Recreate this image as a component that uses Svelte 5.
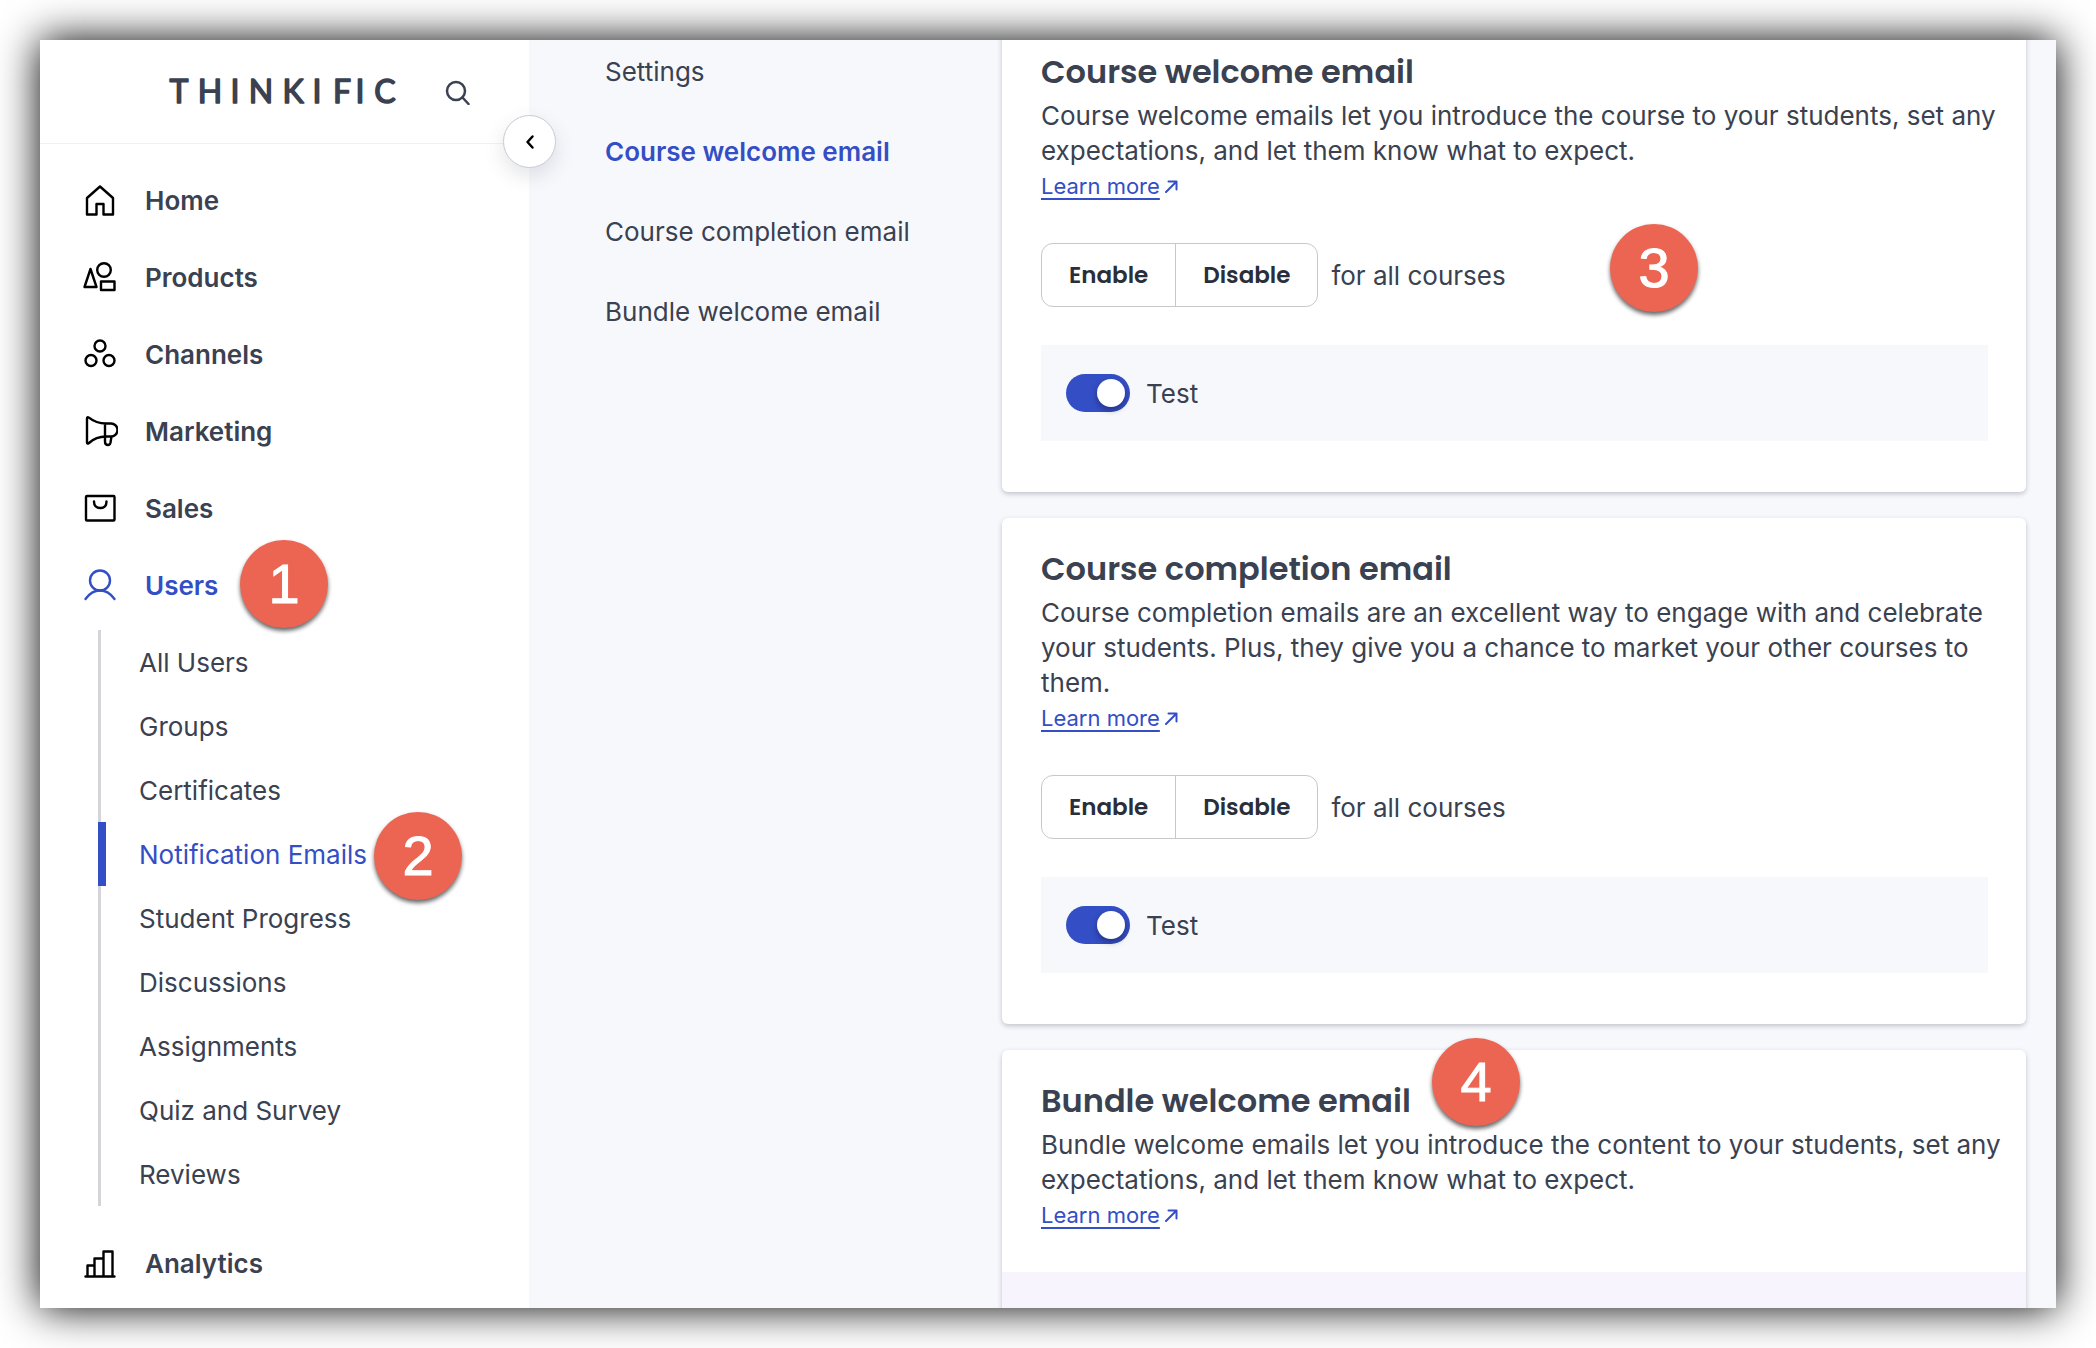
<script>
  const mainNav = [
    { name: 'Home', icon: 'home' },
    { name: 'Products', icon: 'products' },
    { name: 'Channels', icon: 'channels' },
    { name: 'Marketing', icon: 'marketing' },
    { name: 'Sales', icon: 'sales' },
    {
      name: 'Users',
      icon: 'users',
      active: true,
      step: 1,
      children: [
        { name: 'All Users' },
        { name: 'Groups' },
        { name: 'Certificates' },
        { name: 'Notification Emails', active: true, step: 2 },
        { name: 'Student Progress' },
        { name: 'Discussions' },
        { name: 'Assignments' },
        { name: 'Quiz and Survey' },
        { name: 'Reviews' },
      ],
    },
    { name: 'Analytics', icon: 'analytics' },
  ];

  const sections = ['Settings', 'Course welcome email', 'Course completion email', 'Bundle welcome email'];
  let currentSection = 'Course welcome email';

  let cards = [
    {
      id: 'course-welcome',
      title: 'Course welcome email',
      text: 'Course welcome emails let you introduce the course to your students, set any expectations, and let them know what to expect.',
      courses: [{ name: 'Test', enabled: true }],
      step: 3,
    },
    {
      id: 'course-completion',
      title: 'Course completion email',
      text: 'Course completion emails are an excellent way to engage with and celebrate your students. Plus, they give you a chance to market your other courses to them.',
      courses: [{ name: 'Test', enabled: true }],
    },
    {
      id: 'bundle-welcome',
      title: 'Bundle welcome email',
      text: 'Bundle welcome emails let you introduce the content to your students, set any expectations, and let them know what to expect.',
      courses: [],
      titleStep: 4,
    },
  ];

  function setAll(card, enabled) {
    card.courses.forEach((course) => {
      course.enabled = enabled;
    });
    cards = cards;
  }
</script>

<div class="window">
  <aside class="sidebar">
    <header class="brand">
      <svg class="logo" width="234" height="48" viewBox="0 0 234 48" role="img" aria-label="Thinkific">
        <text y="35" x="14 45 70 96 128 152 177 195 220">THINKIFIC</text>
      </svg>
      <button class="search" aria-label="Search">
        <svg width="26" height="26" viewBox="0 0 26 26">
          <circle cx="11" cy="12" r="9" />
          <path d="M17.5 18.5 L23.5 25" />
        </svg>
      </button>
      <button class="collapse" aria-label="Collapse menu">
        <svg width="10" height="16" viewBox="0 0 10 16"><path d="M7.500 2.500 L2.500 8 L7.500 13.500" /></svg>
      </button>
    </header>

    <nav class="main-nav">
      {#each mainNav as item}
        <a class="nav-item" class:active={item.active} href="#{item.icon}">
          <svg width="36" height="36" viewBox="0 0 36 36">
            {#if item.icon === 'home'}
              <path d="M5 31.500 V15 L18 3.500 L31 15 V31.500 H21.500 V21 H14.500 V31.500 Z" />
            {:else if item.icon === 'products'}
              <path d="M8.500 9 L2.500 27 H14.500 Z" />
              <circle cx="22" cy="10" r="6.800" />
              <rect x="19" y="21.500" width="13.500" height="8.500" />
            {:else if item.icon === 'channels'}
              <circle cx="18" cy="9" r="5.500" />
              <circle cx="9" cy="23.500" r="5.500" />
              <circle cx="27" cy="23.500" r="5.500" />
            {:else if item.icon === 'marketing'}
              <path d="M5 4.500 Q5 2.500 7 3.700 Q14 9.500 24 9.500 H29 A6.500 6.500 0 0 1 29 22.500 H24 Q14 22.500 7 29 Q5 30.500 5 28.500 Z M23 9.500 V22.500 M23 22.500 V27.500 Q23 31 26 31 Q28 31 28.500 28.500 L29.500 22.500" />
            {:else if item.icon === 'sales'}
              <rect x="4" y="5" width="28.500" height="24.500" rx="1" />
              <path d="M12 10.500 Q12 17 18.500 17 Q24.500 17 24.500 10.500" />
            {:else if item.icon === 'users'}
              <circle cx="18" cy="12.500" r="10" />
              <path d="M3.500 31 Q9.500 22.500 18 22.500 Q26.500 22.500 32.500 31" />
            {:else if item.icon === 'analytics'}
              <path d="M3.500 30.500 H32.500 M5.500 30.500 V19.500 H12.500 M12.500 30.500 V12.500 H21.500 M21.500 30.500 V5.500 H30.500 V30.500" />
            {/if}
          </svg>
          <span>{item.name}</span>
          {#if item.step}<span class="step step-nav">{item.step}</span>{/if}
        </a>
        {#if item.children}
          <ul class="sub-nav">
            {#each item.children as child}
              <li class:active={child.active}>
                <a href="#sub">{child.name}</a>
                {#if child.step}<span class="step step-sub">{child.step}</span>{/if}
              </li>
            {/each}
          </ul>
        {/if}
      {/each}
    </nav>
  </aside>

  <nav class="sections">
    {#each sections as section}
      <a href="#section" class:current={section === currentSection} on:click={() => (currentSection = section)}>{section}</a>
    {/each}
  </nav>

  <main class="cards">
    {#each cards as card}
      <section class="card">
        <div class="card-body">
          <h2>{card.title}
            {#if card.titleStep}<span class="step step-title">{card.titleStep}</span>{/if}
          </h2>
          <p>{card.text}</p>
          <div class="learn">
            <a href="#{card.id}">Learn more</a>
            <svg width="13" height="13" viewBox="0 0 13 13"><path d="M1 12 L11.500 1.500 M3.500 1.500 H11.500 V9.500" /></svg>
          </div>

          {#if card.courses.length}
            <div class="bulk">
              <div class="group">
                <button on:click={() => setAll(card, true)}>Enable</button>
                <button on:click={() => setAll(card, false)}>Disable</button>
              </div>
              <span>for all courses</span>
              {#if card.step}<span class="step step-bulk">{card.step}</span>{/if}
            </div>
            {#each card.courses as course}
              <div class="course">
                <input type="checkbox" id="{card.id}-toggle" bind:checked={course.enabled} />
                <label for="{card.id}-toggle">{course.name}</label>
              </div>
            {/each}
          {/if}
        </div>
        {#if !card.courses.length}
          <div class="notice"></div>
        {/if}
      </section>
    {/each}
  </main>
</div>

<style>
  :global(body) {
    background: #fff;
  }

  .window {
    display: flex;
    height: calc(100vh - 80px);
    margin: 40px;
    overflow: hidden;
    background: #f7f8fc;
    box-shadow: 0 0 40px #000;
    color: #3a4150;
    font-family: Inter, sans-serif;
    font-size: 26px;
    line-height: 35px;
  }

  a {
    color: inherit;
    text-decoration: none;
  }

  button {
    padding: 0;
    border: none;
    background: none;
    cursor: pointer;
  }

  svg {
    flex: none;
    fill: none;
    stroke: currentColor;
    stroke-width: 2;
    stroke-linecap: round;
    stroke-linejoin: round;
  }

  .sidebar {
    flex: 0 0 489px;
    background: #fff;
  }

  .brand {
    position: relative;
    display: flex;
    align-items: center;
    justify-content: flex-end;
    gap: 46px;
    height: 103px;
    padding-right: 58px;
    border-bottom: 1px solid #f0f1f3;
  }

  .logo {
    color: #3a4150;
    fill: currentColor;
    stroke-width: 1.5;
    font-family: Lato, sans-serif;
    font-size: 32px;
    font-weight: 400;
    text-anchor: middle;
  }

  .search {
    display: flex;
    color: #3a4150;
  }

  .search svg {
    stroke-width: 2.5;
  }

  .collapse {
    position: absolute;
    right: -27px;
    bottom: -25px;
    display: flex;
    align-items: center;
    justify-content: center;
    width: 53px;
    height: 53px;
    border: 1px solid #c9cad6;
    border-radius: 50%;
    background: #fff;
    box-shadow: 0 8px 20px rgba(58, 65, 80, 0.14);
    color: #000;
  }

  .collapse svg {
    stroke-width: 2.5;
  }

  .main-nav {
    padding-top: 18px;
  }

  .nav-item {
    position: relative;
    display: flex;
    align-items: center;
    gap: 27px;
    height: 77px;
    padding-left: 42px;
    font-weight: 600;
  }

  .nav-item svg {
    color: #000;
    stroke-width: 2.4;
  }

  .active,
  .nav-item.active svg {
    color: #344ec5;
  }

  .sub-nav {
    margin: 6px 0 19px 58px;
    padding: 0;
    border-left: 3px solid #d3d5d8;
    list-style: none;
  }

  .sub-nav li {
    position: relative;
    display: flex;
    align-items: center;
    height: 64px;
    padding-left: 38px;
  }

  .sub-nav li.active::before {
    content: '';
    position: absolute;
    top: 0;
    bottom: 0;
    left: -3px;
    width: 8px;
    background: #344ec5;
  }

  .sections {
    flex: 0 0 397px;
    display: flex;
    flex-direction: column;
    gap: 48px;
    padding: 16px 0 0 76px;
    line-height: 32px;
  }

  .sections .current {
    color: #344ec5;
    font-weight: 600;
  }

  .cards {
    flex: 1;
    display: flex;
    flex-direction: column;
    gap: 26px;
    margin: -19px 30px 0 0;
  }

  .card {
    flex: none;
    border-radius: 6px;
    background: #fff;
    box-shadow: 0 2px 5px rgba(40, 45, 60, 0.26);
  }

  .card-body {
    padding: 31px 38px 39px 39px;
  }

  .card-body:last-child {
    padding-bottom: 51px;
  }

  h2 {
    position: relative;
    width: fit-content;
    margin: 0 0 6px;
    font-family: Poppins, Inter, sans-serif;
    font-size: 32px;
    font-weight: 600;
    line-height: 40px;
  }

  p {
    margin: 0 -24px 0 0;
  }

  .learn {
    display: flex;
    align-items: center;
    gap: 5px;
    color: #344ec5;
    font-size: 22px;
    line-height: 36px;
  }

  .learn a {
    text-decoration: underline;
    text-decoration-thickness: 2px;
    text-underline-offset: 4px;
  }

  .bulk {
    position: relative;
    display: flex;
    align-items: center;
    gap: 13px;
    margin: 39px 0 38px;
  }

  .group {
    display: flex;
    border: 1px solid #c8c8c8;
    border-radius: 12px;
  }

  .group button {
    height: 62px;
    padding: 0 27px;
    color: #292e3a;
    font-family: Poppins, Inter, sans-serif;
    font-size: 23px;
    font-weight: 600;
  }

  .group button + button {
    border-left: 1px solid #c8c8c8;
  }

  .course {
    display: flex;
    align-items: center;
    gap: 16px;
    height: 96px;
    padding-left: 25px;
    background: #f7f8fc;
  }

  .course input {
    appearance: none;
    display: flex;
    align-items: center;
    width: 64px;
    height: 38px;
    margin: 0;
    padding: 0 5px;
    border-radius: 19px;
    background: #a5a9b3;
    cursor: pointer;
  }

  .course input::before {
    content: '';
    width: 28px;
    height: 28px;
    border-radius: 50%;
    background: #fff;
    box-shadow: 0 3px 6px rgba(0, 0, 0, 0.35);
  }

  .course input:checked {
    justify-content: flex-end;
    background: #344ec5;
  }

  .notice {
    height: 120px;
    background: #f7f4fd;
  }

  /* numbered callouts laid over the page */
  .step {
    position: absolute;
    z-index: 1;
    width: 88px;
    border-radius: 50%;
    background: #ec6553;
    box-shadow: 0 3px 4px rgba(0, 0, 0, 0.6);
    color: #fff;
    font-family: 'Liberation Sans', sans-serif;
    font-size: 56px;
    font-weight: 400;
    line-height: 88px;
    text-align: center;
    -webkit-text-stroke: 1px #fff;
  }

  .step-nav {
    top: -7px;
    left: 200px;
  }

  .step-sub {
    top: -10px;
    left: 273px;
  }

  .step-bulk {
    top: -19px;
    left: 569px;
  }

  .step-title {
    top: -43px;
    left: 391px;
  }
</style>
